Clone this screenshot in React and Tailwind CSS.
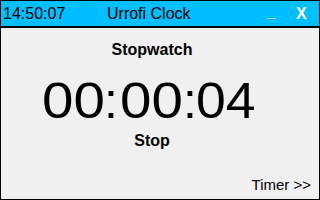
export default function App() {
  return (
    <div className="w-[320px] h-[200px] border border-black bg-[#f0f0f0] flex flex-col overflow-hidden text-black" style={{ fontFamily: "'Liberation Sans', Arial, sans-serif" }}>
      {/* title bar */}
      <div className="h-[27px] shrink-0 bg-[#00bfff] border-b-2 border-black flex items-center text-[16px] leading-none">
        <span className="w-[106px] pl-[2px]">14:50:07</span>
        <span className="flex-1">Urrofi Clock</span>
        <span className="w-[29px] text-white font-bold relative -top-[2px]">_</span>
        <span className="w-[23px] text-white font-bold">X</span>
      </div>

      {/* stopwatch body */}
      <div className="flex-1 flex flex-col">
        <div className="mt-[14px] pr-[16px] text-center text-[16px] font-bold leading-none">Stopwatch</div>
        <div className="mt-[18px] pl-[41px] flex text-[50px] leading-none">
          <span className="w-[61px] scale-x-[1.13] origin-left">00</span>
          <span className="w-[17px] pl-[1px]">:</span>
          <span className="w-[62px] scale-x-[1.13] origin-left">00</span>
          <span className="w-[14px] pl-[1px] tracking-[-2px]">:</span>
          <span className="scale-x-[1.07] origin-left">04</span>
        </div>
        <div className="mt-[7px] pr-[16px] text-center text-[16px] font-bold leading-none">Stop</div>
        <div className="mt-auto self-end pr-[8px] pb-[7px] text-[15px] leading-none">Timer &gt;&gt;</div>
      </div>
    </div>
  );
}
